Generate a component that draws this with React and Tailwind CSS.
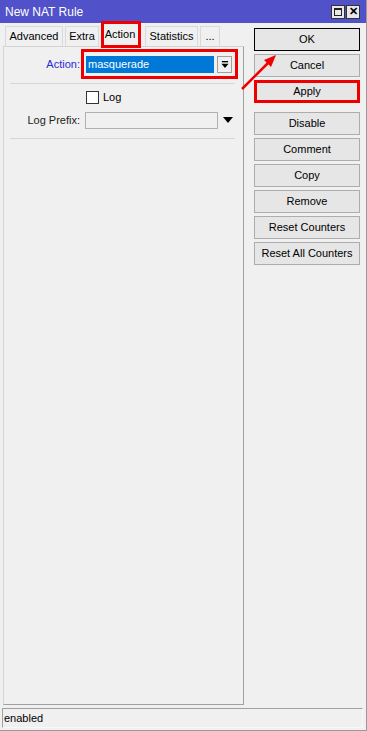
import React from 'react';

const btnClass =
  'flex h-[23px] w-[106px] items-center justify-center border border-[#adadad] bg-[#e6e6e6] text-black';

function Tab({ label, w, selected }) {
  return (
    <div
      className={
        selected
          ? `flex h-[24px] items-center justify-center border border-b-0 border-[#d0d0d0] bg-[#f0f0f0] ${w}`
          : `flex h-[20px] items-center justify-center border border-b-0 border-[#d9d9d9] bg-[#f0f0f0] ${w}`
      }
    >
      {label}
    </div>
  );
}

function DropIcon() {
  return (
    <svg width="8" height="8" viewBox="0 0 9 9">
      <rect x="1" y="0" width="7" height="1.5" fill="#000" />
      <path d="M0.5 3 L8.5 3 L4.5 8 Z" fill="#000" />
    </svg>
  );
}

export default function App() {
  return (
    <div className="relative h-[731px] w-[367px] overflow-hidden border-r border-b border-[#9a9a9a] bg-[#f0f0f0] font-['Liberation_Sans',Arial,sans-serif] text-[11px] text-black">
      {/* title bar */}
      <div className="flex h-[23px] items-center justify-between bg-[#5151c9] pl-[5px] pr-[6px]">
        <span className="text-[12px] text-white">New NAT Rule</span>
        <div className="flex gap-[1px]">
          <div className="flex h-[14px] w-[14px] items-center justify-center border border-[#333] bg-[#e8e8e8]">
            <div className="h-[8px] w-[8px] border border-t-2 border-[#222]" />
          </div>
          <div className="flex h-[14px] w-[14px] items-center justify-center border border-[#333] bg-[#e8e8e8] text-[11px] font-bold leading-none">
            ✕
          </div>
        </div>
      </div>

      <div className="flex h-[684px]">
        {/* left column */}
        <div className="ml-[3px] flex w-[241px] flex-col">
          <div className="flex h-[23px] items-end gap-[2px] pl-[2px]">
            <Tab label="Advanced" w="w-[58px]" />
            <Tab label="Extra" w="w-[34px]" />
            <Tab label="Action" w="w-[38px]" selected />
            <div className="w-[2px]" />
            <Tab label="Statistics" w="w-[53px]" />
            <Tab label="..." w="w-[20px]" />
          </div>
          <div className="h-[659px] border border-[#d4d4d4] border-r-[#a0a0a0] border-b-[#a0a0a0] pt-[9px]">
            <div className="flex items-center">
              <div className="w-[76px] text-right text-[#2b2bd6]">Action:</div>
              <div className="ml-[6px] flex h-[17px] w-[128px] items-center bg-[#0078d7] px-[2px] text-white">
                masquerade
              </div>
              <div className="ml-[3px] flex h-[17px] w-[15px] items-center justify-center border border-[#a0a0a0] bg-[#f0f0f0]">
                <DropIcon />
              </div>
            </div>
            <div className="ml-[6px] mt-[10px] h-[1px] w-[225px] bg-[#d6d6d6]" />
            <div className="mt-[5px] flex items-center">
              <div className="ml-[82px] h-[13px] w-[13px] border border-[#333] bg-white" />
              <span className="ml-[4px]">Log</span>
            </div>
            <div className="mt-[6px] flex items-center">
              <div className="w-[76px] text-right text-[#222]">Log Prefix:</div>
              <div className="ml-[5px] h-[17px] w-[133px] border border-[#b0b0b0] bg-[#f0f0f0]" />
              <svg className="ml-[5px]" width="10" height="6" viewBox="0 0 10 6">
                <path d="M0 0 L10 0 L5 6 Z" fill="#000" />
              </svg>
            </div>
            <div className="ml-[6px] mt-[9px] h-[1px] w-[225px] bg-[#d6d6d6]" />
          </div>
        </div>

        {/* right column */}
        <div className="ml-[10px] mt-[5px] flex flex-col gap-[3px]">
          <div className={`${btnClass} border-black`}>OK</div>
          <div className={btnClass}>Cancel</div>
          <div className={`${btnClass} border-[3px] border-[#ee0000]`}>Apply</div>
          <div className={`${btnClass} mt-[6px]`}>Disable</div>
          <div className={btnClass}>Comment</div>
          <div className={btnClass}>Copy</div>
          <div className={btnClass}>Remove</div>
          <div className={btnClass}>Reset Counters</div>
          <div className={btnClass}>Reset All Counters</div>
        </div>
      </div>

      {/* status bar */}
      <div className="ml-[2px] mt-[1px] flex h-[20px] w-[361px] items-center border border-[#a0a0a0] border-r-[#f8f8f8] border-b-[#f8f8f8] pl-[1px]">
        enabled
      </div>

      {/* annotations */}
      <div className="absolute left-[101px] top-[21px] h-[27px] w-[40px] border-[3px] border-[#ee0000]" />
      <div className="absolute left-[81px] top-[49px] h-[30px] w-[157px] border-[3px] border-[#ee0000]" />
      <svg className="absolute left-0 top-0" width="367" height="731" viewBox="0 0 367 731">
        <line x1="242" y1="89" x2="269" y2="62" stroke="#ee0000" strokeWidth="2.5" />
        <path d="M276 55 L264 60 L271 67 Z" fill="#ee0000" />
      </svg>
    </div>
  );
}
